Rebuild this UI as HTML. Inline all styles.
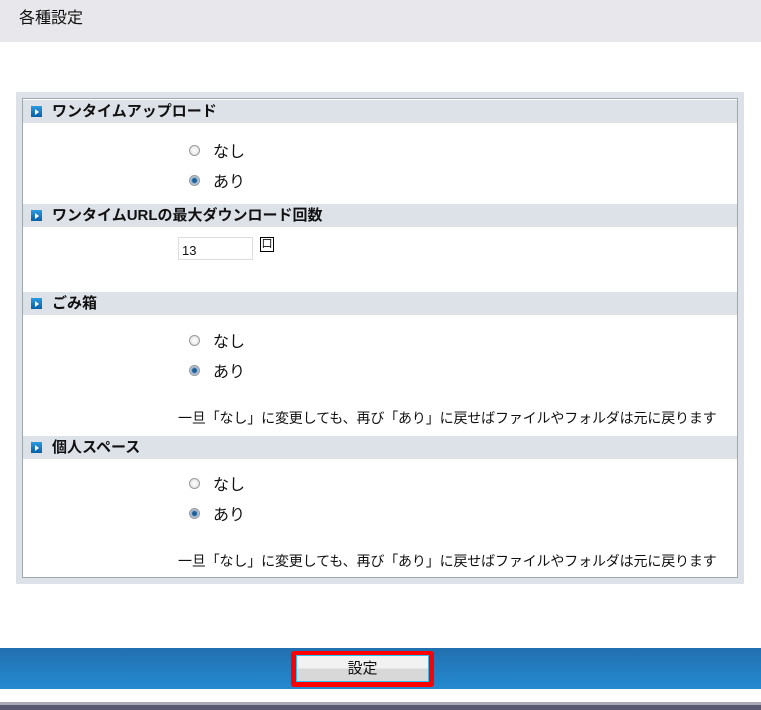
<!DOCTYPE html><html><head><meta charset="utf-8"><style>
body{margin:0;width:761px;height:710px;position:relative;overflow:hidden;background:#fff;font-family:"Liberation Sans","Noto Sans CJK JP",sans-serif;color:#111}
.a{position:absolute}
.hd{left:0;top:0;width:761px;height:42px;background:#e8e8ec;font-size:16px;line-height:38px;padding-left:19px;box-sizing:border-box}
.outer{left:16px;top:92px;width:728px;height:492px;background:#dde1e8}
.inner{left:22px;top:98px;width:716px;height:480px;background:#fff;border:1px solid #a0a8b0;box-sizing:border-box}
.sh{left:23px;width:714px;height:23px;background:#dde1e8;font-size:15px;font-weight:bold;line-height:23px;padding-left:29px;box-sizing:border-box}
.sh:before{content:"";position:absolute;left:8px;top:6px;width:11px;height:11px;background:linear-gradient(#2a9be0,#0a5fa8)}
.sh:after{content:"";position:absolute;left:12px;top:9px;border-left:4px solid #fff;border-top:3px solid transparent;border-bottom:3px solid transparent}
.r{left:189px;width:11px;height:11px;border-radius:50%;border:1px solid #999;background:radial-gradient(#fff,#ddd);box-sizing:border-box}
.r.on{background:radial-gradient(#1a5f9a 30%,#9fb8d0 50%,#eee)}
.t{font-size:16px;line-height:20px}
.d{left:178px;font-size:14px;line-height:18px;letter-spacing:-0.15px}
</style></head><body>
<div class="a hd">各種設定</div>
<div class="a outer"></div><div class="a inner"></div>
<div class="a sh" style="top:100px">ワンタイムアップロード</div>
<div class="a r" style="top:145px"></div><div class="a t" style="left:213px;top:143px">なし</div>
<div class="a r on" style="top:175px"></div><div class="a t" style="left:213px;top:173px">あり</div>
<div class="a sh" style="top:204px">ワンタイムURLの最大ダウンロード回数</div>
<div class="a" style="left:178px;top:237px;width:75px;height:23px;border:1px solid #ddd;box-sizing:border-box;font-size:13px;line-height:26px;padding-left:3px">13</div>
<div class="a" style="left:260px;top:237px;width:14px;height:15px;border:1px solid #000;box-sizing:border-box;font-size:11px;line-height:13px;text-align:center">口</div>
<div class="a sh" style="top:292px">ごみ箱</div>
<div class="a r" style="top:335px"></div><div class="a t" style="left:213px;top:333px">なし</div>
<div class="a r on" style="top:365px"></div><div class="a t" style="left:213px;top:363px">あり</div>
<div class="a d" style="top:409px">一旦「なし」に変更しても、再び「あり」に戻せばファイルやフォルダは元に戻ります</div>
<div class="a sh" style="top:436px">個人スペース</div>
<div class="a r" style="top:478px"></div><div class="a t" style="left:213px;top:476px">なし</div>
<div class="a r on" style="top:508px"></div><div class="a t" style="left:213px;top:506px">あり</div>
<div class="a d" style="top:552px">一旦「なし」に変更しても、再び「あり」に戻せばファイルやフォルダは元に戻ります</div>
<div class="a" style="left:0;top:648px;width:761px;height:41px;background:linear-gradient(#2270b0,#2589d0)"></div>
<div class="a" style="left:291px;top:651px;width:143px;height:36px;background:#f00;border-radius:3px"></div>
<div class="a" style="left:296px;top:655px;width:133px;height:27px;border:1px solid #30c0f0;box-sizing:border-box;background:linear-gradient(#f2f2f2 50%,#d8d8d8 50%);font-size:15px;text-align:center;line-height:25px">設定</div>
<div class="a" style="left:0;top:702px;width:761px;height:3px;background:#a8a8b8"></div>
<div class="a" style="left:0;top:705px;width:761px;height:5px;background:#585870"></div>
</body></html>
